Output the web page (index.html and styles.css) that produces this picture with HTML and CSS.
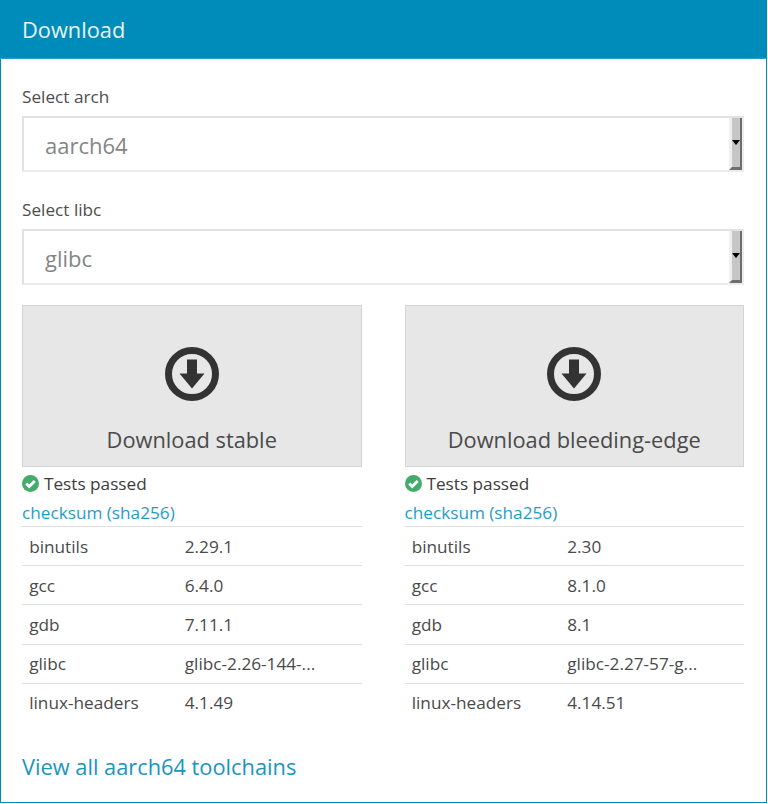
FILE: index.html
```html
<!DOCTYPE html>
<html lang="en">
<head>
<meta charset="utf-8">
<title>Download</title>
<link rel="stylesheet" href="styles.css">
</head>
<body>
<div class="panel">
  <div class="panel-head">Download</div>
  <div class="panel-body">
    <div class="field-label">Select arch</div>
    <div class="select">
      <span class="select-value">aarch64</span>
      <span class="select-btn"><span class="select-arrow"></span></span>
    </div>
    <div class="field-label">Select libc</div>
    <div class="select">
      <span class="select-value">glibc</span>
      <span class="select-btn"><span class="select-arrow"></span></span>
    </div>
    <div class="columns">
      <div class="col">
        <a class="dl-btn">
          <svg class="dl-icon" viewBox="0 0 54 54"><circle cx="27" cy="27" r="23.500" fill="none" stroke="#333" stroke-width="7"/><path d="M22 12.500h10v14h7.500L27 41.500 14.500 26.500H22z" fill="#333"/></svg>
          <span>Download stable</span>
        </a>
        <div class="status">
          <svg class="check" viewBox="0 0 16 16"><circle cx="8" cy="8" r="8" fill="#43ac6a"/><path d="M4 8l2.800 2.800 5.200-5.200" fill="none" stroke="#fff" stroke-width="2.800"/></svg>
          <span>Tests passed</span>
        </div>
        <a class="checksum">checksum (sha256)</a>
        <div class="versions">
          <div class="row"><span class="k">binutils</span><span class="v">2.29.1</span></div>
          <div class="row"><span class="k">gcc</span><span class="v">6.4.0</span></div>
          <div class="row"><span class="k">gdb</span><span class="v">7.11.1</span></div>
          <div class="row"><span class="k">glibc</span><span class="v">glibc-2.26-144-...</span></div>
          <div class="row"><span class="k">linux-headers</span><span class="v">4.1.49</span></div>
        </div>
      </div>
      <div class="col">
        <a class="dl-btn">
          <svg class="dl-icon" viewBox="0 0 54 54"><circle cx="27" cy="27" r="23.500" fill="none" stroke="#333" stroke-width="7"/><path d="M22 12.500h10v14h7.500L27 41.500 14.500 26.500H22z" fill="#333"/></svg>
          <span>Download bleeding-edge</span>
        </a>
        <div class="status">
          <svg class="check" viewBox="0 0 16 16"><circle cx="8" cy="8" r="8" fill="#43ac6a"/><path d="M4 8l2.800 2.800 5.200-5.200" fill="none" stroke="#fff" stroke-width="2.800"/></svg>
          <span>Tests passed</span>
        </div>
        <a class="checksum">checksum (sha256)</a>
        <div class="versions">
          <div class="row"><span class="k">binutils</span><span class="v">2.30</span></div>
          <div class="row"><span class="k">gcc</span><span class="v">8.1.0</span></div>
          <div class="row"><span class="k">gdb</span><span class="v">8.1</span></div>
          <div class="row"><span class="k">glibc</span><span class="v">glibc-2.27-57-g...</span></div>
          <div class="row"><span class="k">linux-headers</span><span class="v">4.14.51</span></div>
        </div>
      </div>
    </div>
    <a class="view-all">View all aarch64 toolchains</a>
  </div>
</div>
</body>
</html>
```
FILE: styles.css
```css
* { box-sizing: border-box; }
html, body { margin: 0; padding: 0; background: #fff; }
body { font-family: "Open Sans", sans-serif; color: #333; height: 804px; overflow: hidden; }
.panel { width: 767px; height: 803px; border: 1px solid #008cba; border-top: 0; display: flex; flex-direction: column; }
.panel-head { margin: 0 -1px; height: 59px; background: #008cba; color: #e8f4f9; font-size: 21.8px; line-height: 59px; padding-left: 22px; border-bottom: 1px solid #2a9fc8; }
.panel-body { padding: 0 22px 0 21px; display: flex; flex-direction: column; }
.field-label { font-size: 17.2px; line-height: 22px; color: #4d4d4d; margin-top: 27px; margin-bottom: 8px; }
.select { height: 56px; border: 2px solid #ececec; border-top-color: #e2e2e2; border-left-color: #e2e2e2; background: #fff; display: flex; align-items: stretch; }
.select-value { flex: 1; font-size: 22px; line-height: 54px; padding-left: 21px; color: #858585; }
.select-btn { width: 13px; background: #c6c6c6; border-style: solid; border-width: 0 2px 3px 3px; border-color: transparent #6e6e6e #6e6e6e #f0f0f0; display: flex; align-items: center; justify-content: center; }
.select-arrow { width: 0; height: 0; border-left: 4px solid transparent; border-right: 4px solid transparent; border-top: 5px solid #000; margin-top: -1px; }
.columns { display: flex; justify-content: space-between; margin-top: 20px; }
.col { width: 339.5px; display: flex; flex-direction: column; }
.dl-btn { height: 162px; background: #e7e7e7; border: 1px solid #d5d5d5; display: flex; flex-direction: column; align-items: center; color: #4a4a4a; font-size: 21.8px; line-height: 28px; }
.dl-icon { width: 54px; height: 54px; margin-top: 41px; margin-bottom: 25px; }
.status { display: flex; align-items: center; gap: 5px; font-size: 17.2px; line-height: 22px; margin-top: 6px; color: #3c3c3c; }
.check { width: 17px; height: 17px; margin-top: -2px; }
.checksum { color: #1f9dc7; font-size: 17.2px; line-height: 22px; margin-top: 7px; margin-bottom: 2px; }
.versions { display: flex; flex-direction: column; }
.row { display: flex; height: 39.2px; align-items: center; border-top: 1px solid #e1e1e1; font-size: 17.2px; color: #4a4a4a; padding-left: 7.2px; }
.k { width: 155.6px; }
.view-all { color: #1b94bf; font-size: 21.8px; line-height: 28px; margin-top: 31px; }
```
